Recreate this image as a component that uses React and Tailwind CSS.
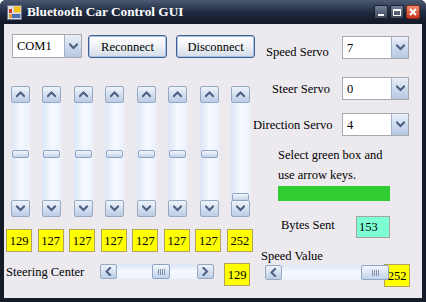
import React from 'react';

const FONT = "font-['Liberation_Serif','DejaVu_Serif',serif]";

function Chevron({ dir = 'down' }) {
    const d = {
        up: 'M1 5 L4.5 1.5 L8 5',
        down: 'M1 1.5 L4.5 5 L8 1.5',
        left: 'M5 1 L1.5 4.5 L5 8',
        right: 'M1.5 1 L5 4.5 L1.5 8',
    }[dir];
    const vert = dir === 'up' || dir === 'down';
    return (
        <svg width={vert ? 9 : 7} height={vert ? 7 : 9} viewBox={vert ? '0 0 9 7' : '0 0 7 9'}>
            <path d={d} fill="none" stroke="#4b5f82" strokeWidth="2" strokeLinecap="square" />
        </svg>
    );
}

function ScrollBtn({ dir, className = '' }) {
    return (
        <div className={`shrink-0 flex items-center justify-center rounded-[2px] border border-[#97a8c3] bg-linear-to-b from-[#eef3fa] to-[#bccde6] ${className}`}>
            <Chevron dir={dir} />
        </div>
    );
}

function Combo({ value, className = '' }) {
    return (
        <div className={`flex shrink-0 bg-white border border-[#a9a8ad] h-[23px] ${className}`}>
            <div className={`flex-1 pl-[4px] flex items-center text-[12.5px] text-black ${FONT}`}>{value}</div>
            <div className="w-[17px] flex items-center justify-center border-l border-[#a3b1c8] bg-linear-to-b from-[#e9eff8] to-[#b7c8e2]">
                <Chevron dir="down" />
            </div>
        </div>
    );
}

function VScroll({ value }) {
    const top = 3 + value * 0.344;
    return (
        <div className="w-[19px] h-[131px] flex flex-col">
            <ScrollBtn dir="up" className="h-[17px]" />
            <div className="relative flex-1 bg-linear-to-r from-[#dce6f5] via-[#f6f9fe] to-[#edf2fb]">
                <div
                    className="absolute left-[1px] right-[1px] h-[8px] rounded-[2px] border border-[#8fa4c4] bg-linear-to-b from-[#f3f7fd] to-[#c3d3ea]"
                    style={{ top }}
                />
            </div>
            <ScrollBtn dir="down" className="h-[17px]" />
        </div>
    );
}

function HScroll({ thumbLeft, thumbWidth, className = '' }) {
    return (
        <div className={`h-[15px] flex shrink-0 ${className}`}>
            <ScrollBtn dir="left" className="w-[17px]" />
            <div className="relative flex-1 bg-linear-to-b from-[#dce6f5] via-[#f6f9fe] to-[#edf2fb]">
                <div
                    className="absolute top-0 bottom-0 rounded-[2px] border border-[#8fa4c4] bg-linear-to-b from-[#f3f7fd] to-[#c3d3ea] flex items-center justify-center gap-[1px]"
                    style={{ left: thumbLeft, width: thumbWidth }}
                >
                    <div className="w-px h-[6px] bg-[#7d8fae]" />
                    <div className="w-px h-[6px] bg-[#7d8fae]" />
                    <div className="w-px h-[6px] bg-[#7d8fae]" />
                    <div className="w-px h-[6px] bg-[#7d8fae]" />
                </div>
            </div>
            <ScrollBtn dir="right" className="w-[17px]" />
        </div>
    );
}

function ValBox({ value, className = '' }) {
    return (
        <div className={`w-[26px] h-[23px] shrink-0 bg-[#ffff00] border border-[#b2a45e] flex items-center justify-center text-[12.5px] text-black ${FONT} ${className}`}>
            {value}
        </div>
    );
}

function WinButton({ children, red }) {
    return (
        <div className={`w-[14px] h-[14px] rounded-[2px] flex items-center justify-center border ${red ? 'border-[#8a2a1c] bg-linear-to-b from-[#f08a70] to-[#c8321c]' : 'border-[#1a2030] bg-linear-to-b from-[#76819a] to-[#3b4558]'}`}>
            {children}
        </div>
    );
}

export default function App() {
    const sliders = [129, 127, 127, 127, 127, 127, 127, 252];
    const btn = `mt-[1px] w-[79px] h-[23px] shrink-0 rounded-[3px] border border-[#3f5f8f] bg-linear-to-b from-white via-[#eef1f6] to-[#d2dbe8] shadow-[inset_0_0_0_1px_#a9c4e6] text-[12.5px] text-black ${FONT}`;

    return (
        <div className={`w-[426px] h-[302px] flex flex-col bg-[#141b29] rounded-t-[6px] overflow-hidden ${FONT}`}>
            {/* Title bar */}
            <div className="h-[24px] flex items-center bg-linear-to-b from-[#4d5a74] via-[#212c42] to-[#111827] pl-[7px] pr-[6px]">
                <svg width="15" height="15" viewBox="0 0 15 15">
                    <rect x="0.5" y="0.5" width="14" height="14" fill="#d8dde8" stroke="#6b7488" />
                    <rect x="7" y="1.5" width="6.5" height="6" fill="#f3c21b" />
                    <rect x="2" y="4" width="3" height="4" fill="#d83a2a" />
                    <rect x="2" y="9" width="11.5" height="4" fill="#4a6fb5" />
                    <rect x="2" y="9" width="3" height="4" fill="#e0a030" />
                </svg>
                <span className={`ml-[5px] text-white font-bold text-[13.3px] leading-none ${FONT}`}>Bluetooth Car Control GUI</span>
                <div className="ml-auto flex gap-[2px]">
                    <WinButton>
                        <div className="w-[6px] h-[2px] bg-white mt-[6px]" />
                    </WinButton>
                    <WinButton>
                        <div className="w-[8px] h-[7px] border-[1.5px] border-white border-t-[2px]" />
                    </WinButton>
                    <WinButton red>
                        <svg width="8" height="8" viewBox="0 0 8 8">
                            <path d="M1 1 L7 7 M7 1 L1 7" stroke="white" strokeWidth="2" />
                        </svg>
                    </WinButton>
                </div>
            </div>

            {/* Client area */}
            <div className={`flex-1 mx-[4px] mb-[4px] bg-[#ece9ef] flex text-[12.5px] leading-[16px] text-black ${FONT}`}>
                {/* Left column */}
                <div className="w-[249px] shrink-0 flex flex-col">
                    <div className="mt-[10px] pl-[8px] flex items-start">
                        <Combo value="COM1" className="w-[70px] h-[24px]" />
                        <button className={`ml-[6px] ${btn}`}>Reconnect</button>
                        <button className={`ml-[9px] ${btn}`}>Disconnect</button>
                    </div>

                    <div className="mt-[28px] ml-[7px] w-[239px] flex justify-between">
                        {sliders.map((v, i) => (
                            <VScroll key={i} value={v} />
                        ))}
                    </div>

                    <div className="mt-[12px] ml-[2px] w-[247px] flex justify-between">
                        {sliders.map((v, i) => (
                            <ValBox key={i} value={v} />
                        ))}
                    </div>

                    <div className="mt-[11px] flex items-start h-[23px]">
                        <div className="w-[96px] pl-[2px] pt-[1px] shrink-0">Steering Center</div>
                        <HScroll thumbLeft={35} thumbWidth={18} className="w-[114px] mt-[1px]" />
                        <ValBox value={129} className="ml-[10px]" />
                    </div>
                </div>

                {/* Right column */}
                <div className="flex-1 flex flex-col">
                    <div className="mt-[12px] flex items-start">
                        <div className="w-[89px] pl-[13px] pt-[8px] shrink-0">Speed Servo</div>
                        <Combo value="7" className="w-[67px]" />
                    </div>
                    <div className="mt-[17px] flex items-center">
                        <div className="w-[89px] pl-[19px] shrink-0">Steer Servo</div>
                        <Combo value="0" className="w-[67px]" />
                    </div>
                    <div className="mt-[13px] flex items-center">
                        <div className="w-[89px] shrink-0">Direction Servo</div>
                        <Combo value="4" className="w-[67px]" />
                    </div>

                    <div className="mt-[9px] pl-[25px] leading-[20px]">
                        <div>Select green box and</div>
                        <div>use arrow keys.</div>
                    </div>
                    <div className="mt-[1px] ml-[25px] w-[112px] h-[15px] bg-[#32cd32]" />

                    <div className="mt-[15px] flex items-start h-[22px]">
                        <div className="w-[103px] pl-[28px] pt-[1px] shrink-0">Bytes Sent</div>
                        <div className="w-[34px] h-[22px] bg-[#7fffd4] border border-[#a3a3a3] flex items-center pl-[2px]">153</div>
                    </div>

                    <div className="mt-[10px] pl-[8px] h-[16px]">Speed Value</div>
                    <div className="flex items-start">
                        <HScroll thumbLeft={79} thumbWidth={28} className="ml-[12px] mt-[1px] w-[115px]" />
                        <ValBox value={252} className="ml-[4px]" />
                    </div>
                </div>
            </div>
        </div>
    );
}
